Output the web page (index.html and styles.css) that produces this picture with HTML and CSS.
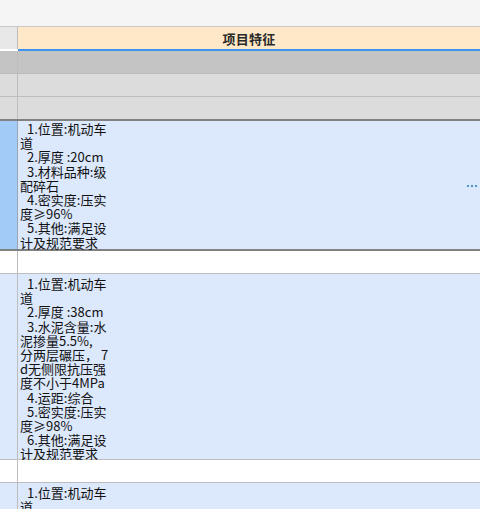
FILE: index.html
```html
<!DOCTYPE html>
<html lang="zh">
<head>
<meta charset="utf-8">
<link rel="stylesheet" href="styles.css">
</head>
<body>
<div class="top"></div>
<div class="grid">
  <div class="row head">
    <div class="idx"></div>
    <div class="cell title">项目特征</div>
  </div>
  <div class="row band-dark">
    <div class="idx"></div>
    <div class="cell"></div>
  </div>
  <div class="row band-light">
    <div class="idx"></div>
    <div class="cell"></div>
  </div>
  <div class="row band-light last-band">
    <div class="idx"></div>
    <div class="cell"></div>
  </div>
  <div class="row data selected r1">
    <div class="idx"></div>
    <div class="cell">
      <div class="text">
        <div class="n">1.位置:机动车</div>
        <div>道</div>
        <div class="n">2.厚度 :20cm</div>
        <div class="n">3.材料品种:级</div>
        <div>配碎石</div>
        <div class="n">4.密实度:压实</div>
        <div>度≥96%</div>
        <div class="n">5.其他:满足设</div>
        <div>计及规范要求</div>
      </div>
      <div class="more"><i></i><i></i><i></i></div>
    </div>
  </div>
  <div class="row blank">
    <div class="idx"></div>
    <div class="cell"></div>
  </div>
  <div class="row data r2">
    <div class="idx"></div>
    <div class="cell">
      <div class="text">
        <div class="n">1.位置:机动车</div>
        <div>道</div>
        <div class="n">2.厚度 :38cm</div>
        <div class="n">3.水泥含量:水</div>
        <div>泥掺量5.5%,</div>
        <div>分两层碾压， 7</div>
        <div>d无侧限抗压强</div>
        <div>度不小于4MPa</div>
        <div class="n">4.运距:综合</div>
        <div class="n">5.密实度:压实</div>
        <div>度≥98%</div>
        <div class="n">6.其他:满足设</div>
        <div>计及规范要求</div>
      </div>
    </div>
  </div>
  <div class="row blank">
    <div class="idx"></div>
    <div class="cell"></div>
  </div>
  <div class="row data r3">
    <div class="idx"></div>
    <div class="cell">
      <div class="text">
        <div class="n">1.位置:机动车</div>
        <div>道</div>
      </div>
    </div>
  </div>
</div>
</body>
</html>
```

FILE: styles.css
```css
html, body {
  margin: 0;
  padding: 0;
  background: #ffffff;
  overflow: hidden;
}
body {
  width: 480px;
  height: 509px;
  font-family: "Noto Sans CJK SC", "Noto Sans", sans-serif;
  font-size: 13px;
  color: #111;
}
.top {
  height: 26px;
  background: #f5f5f5;
  border-bottom: 1px solid #c9c9c9;
}
.grid {
  display: flex;
  flex-direction: column;
}
.row {
  display: flex;
}
.idx {
  width: 17px;
  flex: none;
  border-right: 1px solid #bdbdbd;
}
.cell {
  flex: 1;
  display: flex;
  align-items: center;
}
.head {
  height: 24px;
}
.head .idx {
  background: #e8e8e8;
  height: 22px;
}
.head .cell {
  background: #ffe8c8;
  border-bottom: 2px solid #3d95ef;
  justify-content: center;
  font-weight: bold;
  color: #2a2a2a;
  letter-spacing: 0.3px;
}
.band-dark {
  height: 22px;
  background: #c4c4c4;
  border-bottom: 1px solid #b9b9b9;
}
.band-light {
  height: 22px;
  background: #dcdcdc;
  border-bottom: 1px solid #bdbdbd;
}
.last-band {
  border-bottom: 2px solid #818181;
}
.data {
  background: #dce8fc;
  border-bottom: 1px solid #bdbdbd;
}
.data .cell {
  align-items: flex-start;
}
.r1 {
  height: 128px;
  border-bottom: 2px solid #818181;
}
.r1 .cell {
  align-items: center;
}
.r2 {
  height: 185px;
}
.r3 {
  height: 40px;
}
.selected .idx {
  background: #a3cbf7;
  border-right-color: #9aa6b4;
}
.text {
  padding: 1px 0 0 2px;
  line-height: 14.2px;
  white-space: nowrap;
  align-self: flex-start;
}
.r2 .text, .r3 .text {
  padding-top: 3px;
}
.n {
  padding-left: 7px;
}
.blank {
  height: 22px;
  background: #ffffff;
  border-bottom: 1px solid #bdbdbd;
}
.more {
  margin-left: auto;
  margin-right: 3px;
  display: flex;
  gap: 2px;
  margin-top: 2px;
}
.more i {
  display: block;
  width: 2px;
  height: 2px;
  background: #4f93d0;
}
```
